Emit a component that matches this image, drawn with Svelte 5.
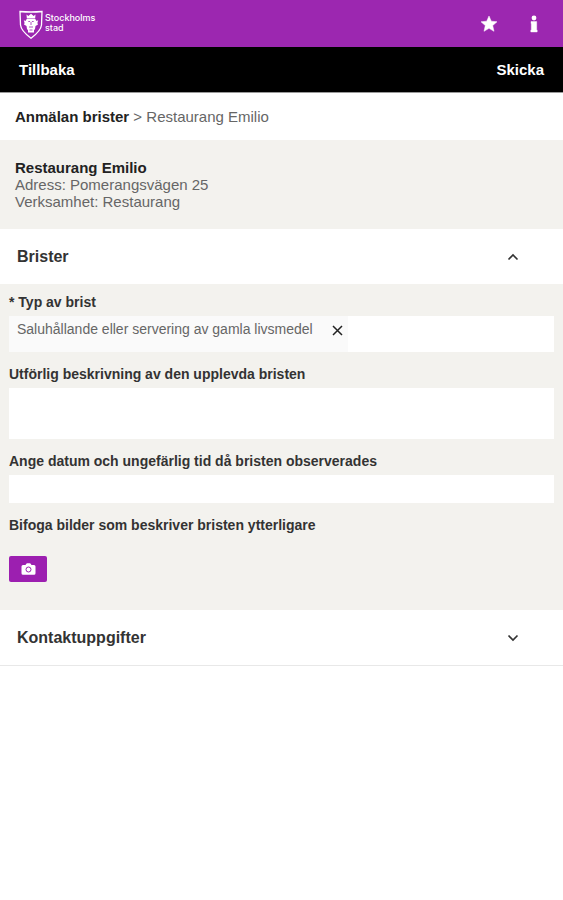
<script>
  let defectsOpen = $state(true);
  let contactOpen = $state(false);
  let defects = $state(['Saluhållande eller servering av gamla livsmedel']);
  let description = $state('');
  let observed = $state('');

  function removeDefect(item) {
    defects = defects.filter((d) => d !== item);
  }
</script>

{#snippet chevron(up)}
  <svg class="chevron" width="12" height="8" viewBox="0 0 12 8" aria-hidden="true">
    <path d={up ? 'M1.5 6.5 6 2l4.5 4.5' : 'M1.5 1.5 6 6l4.5-4.5'} fill="none" stroke="currentColor" stroke-width="1.7" />
  </svg>
{/snippet}

<div class="page">
  <header class="brand-bar">
    <a class="brand" href="#start" aria-label="Stockholms stad, startsida">
      <svg width="24" height="30" viewBox="0 0 24 30" aria-hidden="true">
        <path d="M1 1.5Q12 2.500 23 1.500L22.500 15C22 20.500 17 24.500 12 28.300 7 24.500 2 20.500 1.500 15Z" fill="none" stroke="#fff" stroke-width="1.3" />
        <path d="M7.500 4.500 9.300 6 12 3.700 14.700 6l1.800-1.500-.3 3.500H7.800Z" fill="#fff" />
        <path d="M8 8.500h8l1.500 2.500 1.700-.7-.8 2.700.6 1.500-2.500 1.500-.5 3-1 1.300v2.200H9v-2.200l-1-1.300-.5-3L5 14.500l.6-1.500-.8-2.700 1.700.7Z" fill="#fff" />
        <path d="M9.300 11.500h1.800m1.800 0h1.800M12 12v3m-2 2h4M10.500 20h3" fill="none" stroke="#9c27b0" stroke-width=".8" />
      </svg>
      <span class="wordmark"><span>Stockholms</span><span>stad</span></span>
    </a>
    <nav class="tools" aria-label="Verktyg">
      <button type="button" aria-label="Favoriter">
        <svg width="18" height="18" viewBox="0 0 18 18" aria-hidden="true">
          <path d="m9 1 2.300 5.200 5.700.6-4.300 3.800 1.300 5.700-5-3-5 3 1.300-5.700L1 6.800l5.700-.6Z" fill="#fff" stroke="#fff" stroke-width=".5" />
        </svg>
      </button>
      <button type="button" aria-label="Information">
        <svg width="8" height="18" viewBox="0 0 8 18" aria-hidden="true">
          <circle cx="4" cy="3" r="2.400" fill="#fff" />
          <path d="M1 6.500h5.700v8.500H7.200V17H.8v-2h.5V8.500H1Z" fill="#fff" stroke="#fff" stroke-width=".4" />
        </svg>
      </button>
    </nav>
  </header>

  <div class="action-bar">
    <button type="button">Tillbaka</button>
    <button type="button">Skicka</button>
  </div>

  <nav class="crumbs" aria-label="Sökväg">
    <a href="#anmalan">Anmälan brister</a> &gt; <span>Restaurang Emilio</span>
  </nav>

  <section class="place">
    <h1>Restaurang Emilio</h1>
    <p>Adress: Pomerangsvägen 25</p>
    <p>Verksamhet: Restaurang</p>
  </section>

  <form onsubmit={(e) => e.preventDefault()}>
    <h2>
      <button type="button" aria-expanded={defectsOpen} onclick={() => (defectsOpen = !defectsOpen)}>
        Brister {@render chevron(defectsOpen)}
      </button>
    </h2>
    {#if defectsOpen}
      <div class="fields">
        <div class="field">
          <label for="type">* Typ av brist</label>
          <div class="picker">
            {#each defects as item (item)}
              <span class="chip">
                {item}
                <button type="button" aria-label="Ta bort" onclick={() => removeDefect(item)}>
                  <svg width="11" height="11" viewBox="0 0 11 11" aria-hidden="true">
                    <path d="m1 1 9 9M10 1l-9 9" stroke="#222" stroke-width="1.5" />
                  </svg>
                </button>
              </span>
            {/each}
            <input id="type" type="text" />
          </div>
        </div>
        <div class="field">
          <label for="description">Utförlig beskrivning av den upplevda bristen</label>
          <textarea id="description" bind:value={description}></textarea>
        </div>
        <div class="field">
          <label for="observed">Ange datum och ungefärlig tid då bristen observerades</label>
          <input id="observed" class="line" type="text" bind:value={observed} />
        </div>
        <div class="field photos">
          <span id="photos">Bifoga bilder som beskriver bristen ytterligare</span>
          <button type="button" class="camera" aria-labelledby="photos">
            <svg width="15" height="12" viewBox="0 0 15 12" aria-hidden="true">
              <path d="M2 2h2.500L5.300.8Q5.600.3 6.200.3h2.600q.6 0 .9.5L10.500 2H13q1.500 0 1.500 1.500v6.700q0 1.500-1.500 1.500H2Q.5 11.700.5 10.200V3.500Q.5 2 2 2Z" fill="#fff" />
              <circle cx="7.500" cy="6.500" r="2.500" fill="none" stroke="#9c1fb0" stroke-width="1" />
            </svg>
          </button>
        </div>
      </div>
    {/if}

    <h2 class="last">
      <button type="button" aria-expanded={contactOpen} onclick={() => (contactOpen = !contactOpen)}>
        Kontaktuppgifter {@render chevron(contactOpen)}
      </button>
    </h2>
  </form>
</div>

<style>
  :global(body) {
    margin: 0;
    background: #fff;
  }
  .page {
    font: 15px/17px 'Liberation Sans', Arial, sans-serif;
    color: #666;
  }
  button,
  input,
  textarea {
    box-sizing: border-box;
    margin: 0;
    padding: 0;
    border: 0;
    background: none;
    color: inherit;
    font: inherit;
  }
  button {
    cursor: pointer;
  }
  svg {
    display: block;
    flex: none;
  }
  a {
    text-decoration: none;
  }
  h1,
  h2,
  p {
    margin: 0;
    font-size: inherit;
  }
  .brand-bar {
    display: flex;
    align-items: center;
    justify-content: space-between;
    height: 47px;
    padding: 0 25px 0 19px;
    background: #9c27b0;
  }
  .brand {
    display: flex;
    align-items: center;
    gap: 2px;
    padding-top: 2px;
    color: #fff;
  }
  .wordmark {
    display: flex;
    flex-direction: column;
    padding-bottom: 3px;
    font: 500 9px/10px Inter, 'Liberation Sans', sans-serif;
  }
  .tools {
    display: flex;
    gap: 32px;
  }
  .action-bar {
    display: flex;
    align-items: center;
    justify-content: space-between;
    height: 45px;
    padding: 0 19px;
    border-bottom: 1px solid #999;
    background: #000;
    color: #fff;
    font-weight: bold;
  }
  .crumbs {
    padding: 15px;
  }
  .crumbs a {
    color: #222;
    font-weight: bold;
  }
  .place {
    padding: 19px 15px;
    background: #f3f2ee;
  }
  h1 {
    color: #222;
  }
  h2 {
    color: #333;
    font-size: 16px;
  }
  h2 button {
    display: flex;
    align-items: center;
    justify-content: space-between;
    width: 100%;
    height: 55px;
    padding: 0 44px 0 17px;
    text-align: left;
  }
  .last {
    border-bottom: 1px solid #e8e8e8;
  }
  .chevron {
    color: #333;
  }
  .fields {
    display: flex;
    flex-direction: column;
    gap: 14px;
    padding: 10px 9px 28px;
    background: #f3f2ee;
  }
  .field {
    display: flex;
    flex-direction: column;
    gap: 5px;
  }
  label,
  #photos {
    color: #333;
    font-size: 14px;
    font-weight: bold;
  }
  .picker {
    display: flex;
    min-height: 36px;
    background: #fff;
  }
  .picker input {
    flex: 1;
    min-width: 0;
  }
  .chip {
    display: flex;
    align-items: flex-start;
    gap: 16px;
    padding: 5px 2px 0 8px;
    background: #fafafa;
    font-size: 14px;
  }
  .chip button {
    padding: 4px 3px;
  }
  textarea {
    height: 51px;
    padding: 6px;
    background: #fff;
    resize: none;
  }
  .line {
    height: 28px;
    padding: 0 6px;
    background: #fff;
  }
  .photos {
    gap: 22px;
  }
  .camera {
    display: flex;
    align-items: center;
    justify-content: center;
    align-self: flex-start;
    width: 38px;
    height: 26px;
    border-radius: 2px;
    background: #9c1fb0;
  }
</style>
